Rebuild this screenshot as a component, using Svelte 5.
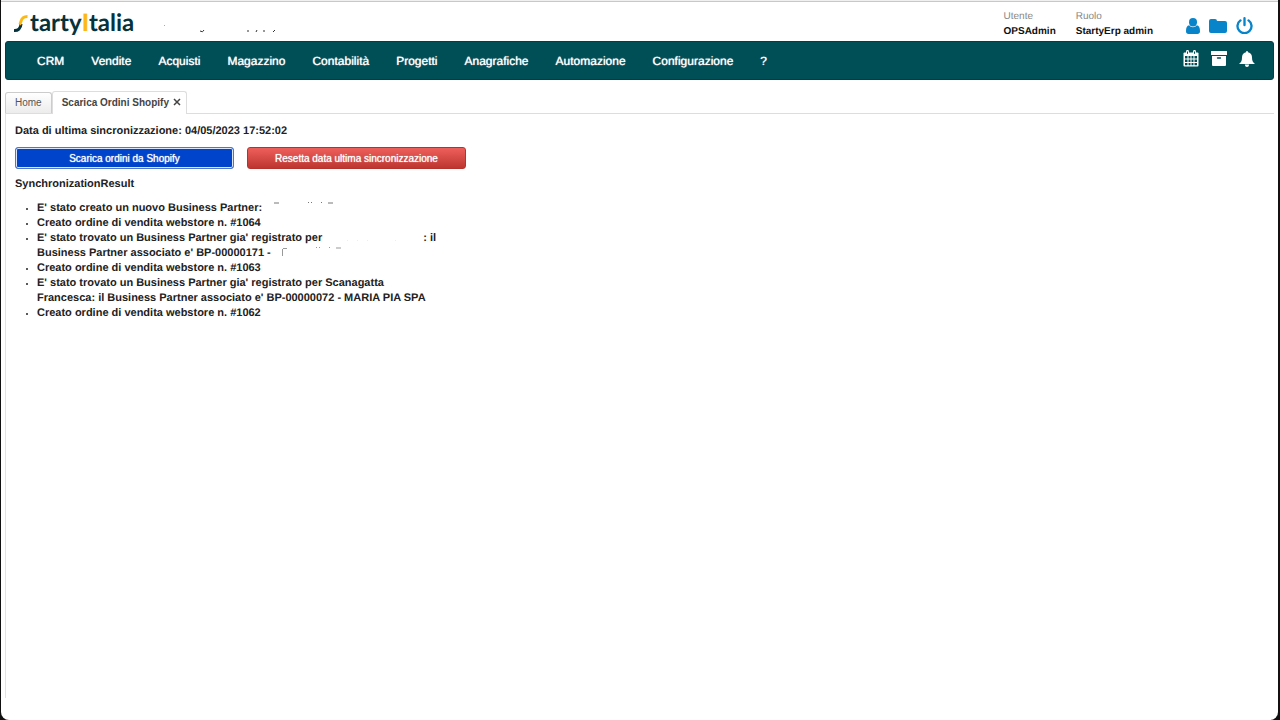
<script lang="ts">
	const menu = [
		'CRM',
		'Vendite',
		'Acquisti',
		'Magazzino',
		'Contabilità',
		'Progetti',
		'Anagrafiche',
		'Automazione',
		'Configurazione',
		'?'
	];

	const account = [
		{ label: 'Utente', value: 'OPSAdmin' },
		{ label: 'Ruolo', value: 'StartyErp admin' }
	];

	const lastSync = '04/05/2023 17:52:02';
</script>

<div class="window">
	<header>
		<a class="logo" href="#home" aria-label="StartyItalia">
			<svg width="16" height="20" viewBox="0 0 16 20" fill="none" stroke-width="3">
				<path d="M0 17.500C4 17.800 6.800 15.500 7 11" stroke="#06323c" />
				<path d="M5.600 11.500C7.800 9 6 3.500 13.500 3.500" stroke="#fdb913" />
			</svg>
			<span>tarty<b>I</b>talia</span>
		</a>
		<svg class="company" width="116" height="12" viewBox="0 0 116 12" aria-hidden="true">
			<g fill="none" stroke="#333">
				<path d="M.5 3v1" stroke="#aaa" />
				<path d="M36 9q3 2 4-1M84 8v2M92 10l1-2M100 8v2M109 10l2-2" />
			</g>
		</svg>
		<dl>
			{#each account as item}
				<div>
					<dt>{item.label}</dt>
					<dd>{item.value}</dd>
				</div>
			{/each}
		</dl>
		<div class="icons user">
			<button aria-label="Profilo">
				<svg width="14" height="16" viewBox="0 0 14 16" fill="currentColor">
					<ellipse cx="7" cy="4.200" rx="4" ry="4.200" />
					<path d="M3.200 7.300C1 7.600 0 9.600 0 13.200C0 15 1 16 2.600 16h8.800c1.600 0 2.600-1 2.600-2.800c0-3.600-1-5.600-3.200-5.900C9.700 8.700 8.500 9.200 7 9.200S4.300 8.700 3.200 7.300z" />
				</svg>
			</button>
			<button aria-label="Documenti">
				<svg width="18" height="14" viewBox="0 0 18 14" fill="currentColor">
					<path d="M2 0h4q2 0 2 2h8q2 0 2 2v8q0 2-2 2H2q-2 0-2-2V2q0-2 2-2z" />
				</svg>
			</button>
			<button aria-label="Esci">
				<svg width="17" height="17" viewBox="0 0 16 16" fill="none" stroke="currentColor" stroke-width="2.200" stroke-linecap="round">
					<path d="M4.200 3.200a6.600 6.600 0 1 0 7.600 0M8 1.200v6.300" />
				</svg>
			</button>
		</div>
	</header>

	<nav>
		<ul>
			{#each menu as entry}
				<li><a href="#menu">{entry}</a></li>
			{/each}
		</ul>
		<div class="icons">
			<button aria-label="Calendario">
				<svg width="16" height="17" viewBox="0 0 16 17">
					<path d="M1.500 2.500h13q1 0 1 1v12q0 1-1 1h-13q-1 0-1-1v-12q0-1 1-1z" fill="#fff" />
					<path d="M2 6h2.500v2.500H2zM5.500 6h2v2.500h-2zM8.500 6h2v2.500h-2zM11.500 6H14v2.500h-2.500zM2 9.500h2.500v2.500H2zM5.500 9.500h2v2.500h-2zM8.500 9.500h2v2.500h-2zM11.500 9.500H14v2.500h-2.500zM2 13h2.500v2.300H2zM5.500 13h2v2.300h-2zM8.500 13h2v2.300h-2zM11.500 13H14v2.300h-2.500z" fill="#004e56" />
					<path d="M4.500 1.300v2.500M11.500 1.300v2.500" stroke="#fff" stroke-width="2.800" stroke-linecap="round" />
					<path d="M4.500 1.500v2.300M11.500 1.500v2.300" stroke="#004e56" />
				</svg>
			</button>
			<button aria-label="Archivio">
				<svg width="16" height="15" viewBox="0 0 16 15">
					<path d="M.5 0h15q.5 0 .5.500v3.500H0V.5Q0 0 .5 0zM1 5h14v9q0 1-1 1H2q-1 0-1-1z" fill="#fff" />
					<path d="M6.500 7h3" stroke="#004e56" stroke-width="1.300" stroke-linecap="round" />
				</svg>
			</button>
			<button aria-label="Notifiche">
				<svg width="16" height="16" viewBox="0 0 16 16" fill="#fff">
					<path d="M8 0q1 0 1 1.300C12 2 13 4 13 6.500C13 10 14 11.500 16 13H0c2-1.500 3-3 3-6.500C3 4 4 2 7 1.300Q7 0 8 0zM5.800 13.500h4.400Q9.800 16 8 16t-2.200-2.500z" />
				</svg>
			</button>
		</div>
	</nav>

	<div class="tabs" role="tablist">
		<button class="tab" role="tab" aria-selected="false">Home</button>
		<div class="tab active">
			<button role="tab" aria-selected="true">Scarica Ordini Shopify</button>
			<button class="close" aria-label="Chiudi">
				<svg width="8" height="8" viewBox="0 0 8 8" stroke="#444" stroke-width="1.500">
					<path d="M1 1l6 6M7 1L1 7" />
				</svg>
			</button>
		</div>
	</div>

	<main>
		<p>Data di ultima sincronizzazione: {lastSync}</p>
		<div class="actions">
			<button class="download">Scarica ordini da Shopify</button>
			<button class="reset">Resetta data ultima sincronizzazione</button>
		</div>
		<p>SynchronizationResult</p>
		<ul class="results">
			<li>
				E' stato creato un nuovo Business Partner:
				<svg width="72" height="9" viewBox="-8 0 72 9" aria-hidden="true">
					<path d="M1 1h5M35 .5h1M38 .5h1M48 .5h1M55 1h5" stroke="#777" />
				</svg>
			</li>
			<li>Creato ordine di vendita webstore n. #1064</li>
			<li>
				E' stato trovato un Business Partner gia' registrato per
				<svg width="98" height="9" viewBox="0 0 98 9" aria-hidden="true">
					<path d="M22 8.500h1M32 8.500h1M42 8.500h1M70 8.500h1" stroke="#eee" />
				</svg>: il<br />
				Business Partner associato e' BP-00000171 -
				<svg width="72" height="9" viewBox="-8 0 72 9" aria-hidden="true">
					<path d="M.5 9V2M1 1.500h4M34 .5h1M37 .5h1M47 .5h1M54 1h5" stroke="#999" fill="none" />
				</svg>
			</li>
			<li>Creato ordine di vendita webstore n. #1063</li>
			<li>
				E' stato trovato un Business Partner gia' registrato per Scanagatta Francesca: il Business
				Partner associato e' BP-00000072 - MARIA PIA SPA
			</li>
			<li>Creato ordine di vendita webstore n. #1062</li>
		</ul>
	</main>
</div>

<style>
	:global(body) {
		background: #111;
	}

	.window {
		box-sizing: border-box;
		display: flex;
		flex-direction: column;
		min-height: 100vh;
		margin: 0 2px 0 1px;
		padding: 1px 4px 0;
		border-top: 1px solid #f0f0f0;
		border-radius: 0 0 8px 8px;
		background: #fff;
		box-shadow: inset 0 1px #c8c8c8;
		color: #222;
		font: 11px/15px "Liberation Sans", Arial, sans-serif;
		text-rendering: geometricPrecision;
	}

	button {
		padding: 0;
		border: 0;
		background: none;
		color: inherit;
		font: inherit;
		cursor: pointer;
	}

	svg {
		display: block;
	}

	header {
		display: flex;
		align-items: center;
		height: 39px;
		padding: 0 21px 0 9px;
	}

	.logo {
		display: flex;
		align-items: center;
		padding-top: 2px;
		color: #06323c;
		font: bold 24px/28px Lato, sans-serif;
		text-decoration: none;
	}

	.logo b {
		color: #fdb913;
	}

	.company {
		margin: 12px 0 0 30px;
	}

	dl {
		display: flex;
		gap: 20px;
		margin: 5px 33px 0 auto;
		font-size: 10px;
	}

	dt {
		color: #888;
	}

	dd {
		margin: 0;
		color: #111;
		font-weight: bold;
	}

	.icons {
		display: flex;
		align-items: center;
		gap: 12px;
	}

	.user {
		gap: 9px;
		padding-top: 8px;
		color: #0784ca;
	}

	nav {
		display: flex;
		align-items: center;
		justify-content: space-between;
		box-sizing: border-box;
		height: 39px;
		padding: 0 18px 0 31px;
		border: 1px solid #0b3945;
		border-radius: 3px;
		background: #004e56;
	}

	nav .icons {
		padding-bottom: 4px;
	}

	nav ul {
		display: flex;
		gap: 27px;
		margin: 0;
		padding: 2px 0 0;
		list-style: none;
	}

	nav a {
		color: #fff;
		font-size: 12px;
		text-decoration: none;
		text-shadow: 0 0 1px #fff;
	}

	.tabs {
		display: flex;
		align-items: flex-end;
		margin-top: 11px;
		border-bottom: 1px solid #ddd;
	}

	.tab {
		display: flex;
		align-items: center;
		box-sizing: border-box;
		height: 21px;
		padding: 0 9px 2px;
		border: 1px solid #ccc;
		border-bottom: 0;
		border-radius: 3px 3px 0 0;
		background: linear-gradient(#fff, #ececec);
		color: #555;
		font-size: 10px;
	}

	.active {
		gap: 4px;
		height: 23px;
		margin-bottom: -1px;
		padding: 0 5px 2px 9px;
		border-color: #ddd;
		background: #fff;
		color: #444;
		font-weight: bold;
	}

	main {
		flex: 1;
		margin-bottom: 22px;
		padding: 10px 9px 0;
		border-left: 1px solid #e2e2e2;
		font-weight: bold;
	}

	p {
		margin: 0;
	}

	.actions {
		display: flex;
		gap: 13px;
		margin: 8px 0;
	}

	.actions button {
		box-sizing: border-box;
		width: 219px;
		height: 22px;
		border-radius: 3px;
		color: #fff;
		font-size: 10px;
		font-weight: normal;
		text-shadow: 0 0 1px #fff;
	}

	.actions .download {
		border: 1px solid #4f78c4;
		background: #0044cc;
		box-shadow: inset 0 0 0 1px #dce6fa;
	}

	.actions .reset {
		border: 1px solid #b8322d;
		background: linear-gradient(#ee5f5b, #bd362f);
	}

	.results {
		width: 404px;
		margin: 9px 0;
		padding-left: 22px;
	}

	.results li::marker {
		font-size: 8px;
	}

	.results svg {
		display: inline-block;
	}
</style>
